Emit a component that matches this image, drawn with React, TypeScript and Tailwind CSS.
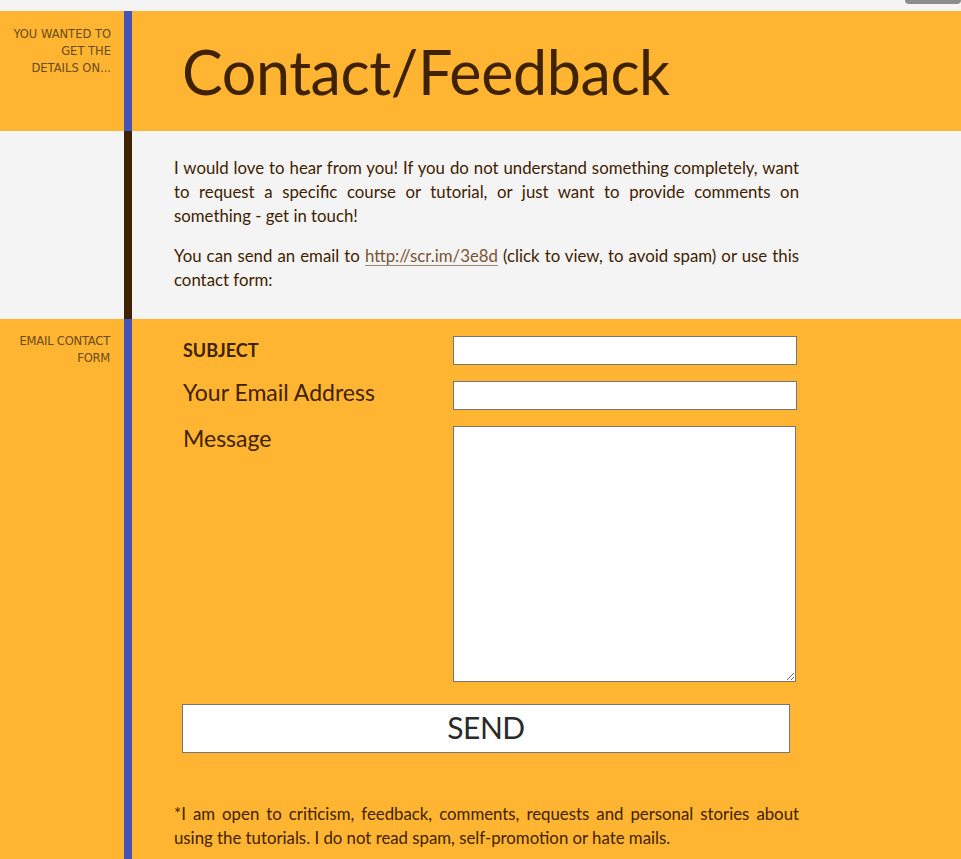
import React from 'react';

const lato = { fontFamily: 'Lato, "Open Sans", sans-serif' };

export default function App() {
  return (
    <div className="relative min-h-[859px] w-full bg-[#f4f4f4] pt-[11px] text-[#3f2200]" style={lato}>
      <div className="absolute right-0 top-0 h-[4px] w-[56px] rounded-b-[4px] bg-[#8c8c8c]" />

      {/* header */}
      <section className="grid grid-cols-[124px_8px_1fr] bg-[#ffb531]">
        <div className="pr-[13px] pt-[15px] text-right text-[11.5px] uppercase leading-[17px] text-[#6a4a1c]" style={{ fontFamily: '"DejaVu Sans", sans-serif' }}>
          You wanted to<br />get the<br />details on...
        </div>
        <div className="bg-[#4354b6]" />
        <div className="flex h-[120px] items-center pl-[50px]">
          <h1 className="text-[61px] leading-none tracking-[-0.4px] text-[#3f2200]">Contact/Feedback</h1>
        </div>
      </section>

      {/* intro */}
      <section className="grid grid-cols-[124px_8px_1fr] bg-[#f4f4f4]">
        <div />
        <div className="bg-[#3f2200]" />
        <div className="w-[667px] pb-[27px] pl-[42px] pt-[25px] text-[16.8px] leading-[24px] text-[#3f2200]">
          <p className="text-justify">
            I would love to hear from you! If you do not understand something completely, want to request a specific course or tutorial, or just want to provide comments on something - get in touch!
          </p>
          <p className="mt-[16px] text-justify">
            You can send an email to{' '}
            <a href="#" className="text-[#7a5535] underline decoration-[#9a8a7a] underline-offset-[3px]">http://scr.im/3e8d</a>{' '}
            (click to view, to avoid spam) or use this contact form:
          </p>
        </div>
      </section>

      {/* form */}
      <section className="grid min-h-[540px] grid-cols-[124px_8px_1fr] bg-[#ffb531]">
        <div className="pr-[14px] pt-[14px] text-right text-[11.5px] uppercase leading-[17px] text-[#6a4a1c]" style={{ fontFamily: '"DejaVu Sans", sans-serif', letterSpacing: '-0.2px' }}>
          Email contact<br />form
        </div>
        <div className="bg-[#4354b6]" />
        <div className="w-[667px] pl-[42px] pt-[17px]">
          <form className="pl-[9px]" onSubmit={(e) => e.preventDefault()}>
            <div className="grid grid-cols-[270px_344px] gap-y-[16px]">
              <label className="flex h-[29px] items-center text-[18px] font-bold uppercase">Subject</label>
              <input className="h-[29px] w-[344px] border border-[#767676] bg-white" />
              <label className="flex h-[29px] items-center pb-[6px] text-[23px]">Your Email Address</label>
              <input className="h-[29px] w-[344px] border border-[#767676] bg-white" />
              <label className="pt-[1px] text-[23px] leading-[22px]">Message</label>
              <textarea className="h-[256px] w-[343px] border border-[#767676] bg-white" />
            </div>
            <button
              type="submit"
              className="mt-[22px] flex h-[49px] w-[608px] -translate-x-[1px] items-center justify-center border border-[#767676] bg-white pb-[3px] text-[30px] tracking-[-0.5px] text-[#2a2a2a]"
            >
              SEND
            </button>
          </form>
          <p className="mt-[49px] text-justify text-[16.8px] leading-[24px]">
            *I am open to criticism, feedback, comments, requests and personal stories about using the tutorials. I do not read spam, self-promotion or hate mails.
          </p>
        </div>
      </section>
    </div>
  );
}
